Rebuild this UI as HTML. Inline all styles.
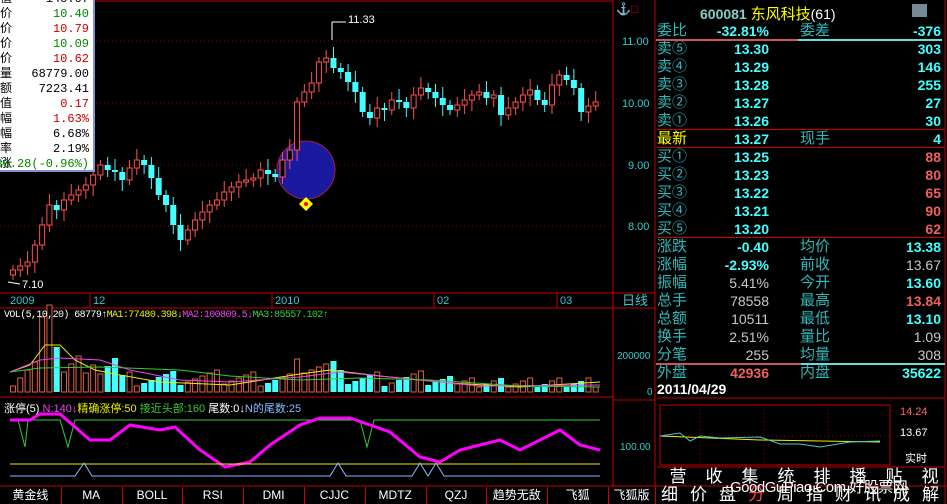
<!DOCTYPE html><html><head><meta charset="utf-8"><style>
body{margin:0;background:#000;width:947px;height:504px;overflow:hidden;position:relative;font-family:"Liberation Sans","Noto Sans CJK SC",sans-serif}
.a{position:absolute;white-space:nowrap}
.rp{position:absolute;left:657px;width:284px;font-size:15px;height:18px;line-height:18px}
.rp .l{position:absolute;left:0;color:#2fb8b8}
.rp .v{position:absolute;right:172px;color:#4ff;font-weight:bold;font-family:"Liberation Sans",sans-serif;font-size:14px}
.rp .l2{position:absolute;left:143px;color:#2fb8b8}
.rp .v2{position:absolute;right:0;color:#4ff;font-weight:bold;font-size:14px}
.g{color:#c8c8c8!important;font-weight:normal!important}
.r{color:#f06060!important}
.ib div{height:15px;line-height:15px;font-size:12px;font-family:"Liberation Mono","Noto Sans CJK SC",monospace;position:relative}
.ib span{position:absolute;right:4px}
.bt{position:absolute;width:36px;text-align:center;color:#fff;font-size:17px;line-height:18px}
</style></head><body>
<svg id="s" width="947" height="504" style="position:absolute;left:0;top:0" font-family="Liberation Sans" font-size="11"></svg>
<div class="a ib" style="left:0;top:-8px;width:93px;height:178px;background:#fff;border:2px solid #8090d0;border-top:none;border-left:none">
<div>值<span>148.07</span></div><div>价<span style="color:#080">10.40</span></div><div>价<span style="color:#c00">10.79</span></div><div>价<span style="color:#080">10.09</span></div><div>价<span style="color:#c00">10.62</span></div><div>量<span>68779.00</span></div><div>额<span>7223.41</span></div><div>值<span style="color:#c00">0.17</span></div><div>幅<span style="color:#c00">1.63%</span></div><div>幅<span>6.68%</span></div><div>率<span>2.19%</span></div><div>涨<span style="color:#080">30.28(-0.96%)</span></div></div>
<div class="a" style="left:700px;top:3px;font-size:14px;color:#9fc"><b style="color:#8cc">600081</b> <span style="color:#ff0;font-size:15px">东风科技</span><span style="color:#fff">(61)</span></div>
<div class="a" style="left:912px;top:4px;width:15px;height:13px;background:#789"></div>
<div id="rp"></div>
<div class="a" style="left:657px;top:381px;color:#fff;font-size:14px;font-weight:bold">2011/04/29</div>
<div class="a" style="left:0;top:487px;width:947px;height:17px;font-size:12px;color:#fff" id="tabs"></div>
<div id="btns"></div>
<script>
var S=document.getElementById('s'),h='';
function L(x1,y1,x2,y2,c,w,d){h+='<line x1="'+x1+'" y1="'+y1+'" x2="'+x2+'" y2="'+y2+'" stroke="'+c+'" stroke-width="'+(w||1)+'"'+(d?' stroke-dasharray="'+d+'"':'')+'/>'}
function R(x,y,w,hh,f,s){h+='<rect x="'+x+'" y="'+y+'" width="'+w+'" height="'+hh+'" fill="'+f+'"'+(s?' stroke="'+s+'"':'')+'/>'}
function T(x,y,t,c,sz,a){h+='<text x="'+x+'" y="'+y+'" fill="'+c+'" font-size="'+(sz||11)+'"'+(a?' text-anchor="'+a+'"':'')+'>'+t+'</text>'}
var red='#c00000';
L(0,1,613,1,red);L(613,0,613,487,red);L(655,0,655,487,red);L(945,0,945,504,red);
L(0,293,613,293,red);L(0,308,655,308,red);L(0,397,613,397,red);L(613,400,655,400,red);L(0,486,947,486,red);
L(613,293,655,293,red);
[41,103,165,226].forEach(function(y){L(0,y,613,y,'#800',1,'1 3')});
T(622,45,'11.00','#3cc');T(622,107,'10.00','#3cc');T(628,169,'9.00','#3cc');T(628,230,'8.00','#3cc');
T(10,304,'2009','#3cc');T(93,304,'12','#3cc');T(275,304,'2010','#3cc');T(437,304,'02','#3cc');T(560,304,'03','#3cc');
[90,272,434,557].forEach(function(x){L(x,293,x,308,red)});
h+='<text x="622" y="305" fill="#3cc" font-size="13" font-family="Noto Sans CJK SC">日线</text>';
T(617,359,'200000','#3cc',10);T(647,395,'0','#3cc',10);T(620,450,'100.00','#3cc',10);
h+='<text x="616" y="13" fill="'+red+'" font-size="12">⚓□</text>';
h+='<circle cx="306" cy="170" r="29" fill="#1a1aa0" stroke="#a02040"/>';
var cl=[270,266,262,245,225,205,210,200,195,190,185,175,165,170,172,180,168,160,165,178,195,205,225,240,230,220,212,205,200,192,187,182,180,178,170,174,177,160,150,102,92,83,62,58,68,72,82,92,112,118,108,110,100,102,108,95,88,92,98,105,110,105,100,95,92,98,95,115,108,102,95,90,100,105,85,75,80,88,112,106,102];
var n=cl.length,dx=590/n,prev=275;
for(var i=0;i<n;i++){var x=10+i*dx,c=cl[i],o=prev,up=c<o;var tp=Math.min(c,o),bm=Math.max(c,o);if(bm-tp<2)bm=tp+2;
var col=up?'#ff5050':'#4ff';L(x+3,tp-5-(i%3)*3,x+3,bm+5+(i%4)*2,col);
if(up)R(x+0.5,tp,5,bm-tp,'#000',col);else R(x,tp,6,bm-tp,col);prev=c;
var v=6+((i*37)%17)+(i<15?(i%5)*5:0)+(i>38&&i<45?12:0);if(i==4||i==5)v=75+(i-4)*12;if(i==6)v=45;if(i>60)v=5+(i%4)*3;
if(up)R(x+0.5,392-v,5,v,'#000','#e06040');else R(x,392-v,6,v,'#4ff');}
T(348,23,'11.33','#fff',11);L(332,22,346,22,'#fff');L(332,22,332,40,'#fff');L(8,282,20,284,'#fff');T(22,288,'7.10','#fff',11);
h+='<path d="M306 197l7 7-7 7-7-7z" fill="#ff0"/><circle cx="306" cy="204" r="2" fill="red"/>';
h+='<polyline fill="none" stroke="#ee0" points="10,372 30,365 45,345 60,345 75,360 95,370 120,375 160,382 230,385 300,374 330,370 380,376 450,383 520,387 600,382"/>';
h+='<polyline fill="none" stroke="#e4e" points="10,372 40,360 60,358 100,360 130,370 180,380 230,382 300,377 340,372 400,378 480,386 600,385"/>';
h+='<polyline fill="none" stroke="#3c3" points="10,372 40,368 100,367 180,370 230,376 300,380 360,378 430,380 520,386 600,387"/>';
h+='<polyline fill="none" stroke="#3c3" points="10,420 18,420 25,447 28,420 60,420 68,447 75,420 360,420 367,447 374,420 600,420"/>';
h+='<polyline fill="none" stroke="#f0f" stroke-width="3" points="10,420 30,420 40,414 60,414 90,440 110,440 130,425 160,430 175,427 200,450 225,467 250,462 270,445 300,425 320,418 350,418 370,425 390,432 420,457 440,462 460,450 500,440 520,450 560,430 580,445 600,450"/>';
L(10,464,600,464,'#ee0');
h+='<polyline fill="none" stroke="#8bf" points="10,476 75,476 84,463 92,476 330,476 338,463 346,476 412,476 420,463 428,476 436,463 444,476 600,476"/>';
L(657,398,945,398,red);L(657,467,945,467,red);R(660,405,230,60,'none',red);
[700,764,828].forEach(function(x){L(x,405,x,465,'#800',1,'1 3')});L(660,436,890,436,'#800',1,'1 3');
h+='<polyline fill="none" stroke="#ee0" points="660,436 760,440 880,442"/><polyline fill="none" stroke="#4cc" points="660,436 680,433 690,441 700,436 720,438 760,437 780,444 800,444 820,447 850,442 880,441"/>';
T(900,415,'14.24','#f66',11);T(900,436,'13.67','#fff',11);h+='<text x="905" y="462" fill="#fff" font-size="11" font-family="Noto Sans CJK SC">实时</text>';
S.innerHTML=h;
function D(x,y,html,st){document.body.insertAdjacentHTML('beforeend','<div class="a" style="left:'+x+'px;top:'+y+'px;'+(st||'')+'">'+html+'</div>')}
D(4,310,'VOL(5,10,20) 68779<span style="color:#fff">↑</span><span style="color:#ee0">MA1:77480.398↓</span><span style="color:#e4e">MA2:100809.5↓</span><span style="color:#3c3">MA3:85557.102↑</span>','color:#fff;font-size:10px;font-family:Liberation Mono,monospace;letter-spacing:-0.6px');
D(4,400,'涨停(5) <span style="color:#e4e">N:140↓</span><span style="color:#ee0">精确涨停:50</span> <span style="color:#3c3">接近头部:160</span> 尾数:0↓<span style="color:#8bf">N的尾数:25</span>','color:#fff;font-size:11px');
var rows=[['委比','-32.81%','委差','-376'],['卖⑤','13.30','','303'],['卖④','13.29','','146'],['卖③','13.28','','255'],['卖②','13.27','','27'],['卖①','13.26','','30'],['最新','13.27','现手','4'],['买①','13.25','','88r'],['买②','13.23','','80r'],['买③','13.22','','65r'],['买④','13.21','','90r'],['买⑤','13.20','','62r'],['涨跌','-0.40','均价','13.38'],['涨幅','-2.93%','前收','13.67g'],['振幅','5.41%g','今开','13.60'],['总手','78558g','最高','13.84r'],['总额','10511g','最低','13.10'],['换手','2.51%g','量比','1.09g'],['分笔','255g','均量','308g'],['外盘','42936r','内盘','35622']];
var out='';rows.forEach(function(r,i){var y=22+i*18;function c(v){return v.slice(-1)=='g'?['g',v.slice(0,-1)]:v.slice(-1)=='r'?['r',v.slice(0,-1)]:['',v]}
var a=c(r[1]),b=c(r[3]);out+='<div class="rp" style="top:'+y+'px"><span class="l"'+(i==6?' style="color:#ff0"':'')+'>'+r[0]+'</span><span class="v '+a[0]+'">'+a[1]+'</span><span class="l2">'+r[2]+'</span><span class="v2 '+b[0]+'">'+b[1]+'</span></div>'});
document.getElementById('rp').innerHTML=out;
D(656,39,'<div style="width:142px;height:2px;background:#c55;display:inline-block"></div><div style="width:144px;height:2px;background:#6dd;display:inline-block"></div>','top:39px;font-size:0');
[129,147,237].forEach(function(y){D(657,y,'','width:288px;height:1px;background:#c00')});
D(801,363,'','width:144px;height:2px;background:#6dd');
D(656,363,'','width:145px;height:2px;background:#c55');
var b1='营收集统排播贴视',b2='细价盘分周指财讯成解',bh='';
for(var k=0;k<8;k++)bh+='<div class="bt" style="left:'+(660+k*36)+'px;top:468px">'+b1[k]+'</div>';
for(var k=0;k<10;k++)bh+='<div class="bt" style="left:'+(655+k*29)+'px;top:486px;width:29px'+(k==3?';color:#f44':'')+'">'+b2[k]+'</div>';
document.getElementById('btns').innerHTML=bh;
D(730,476,'GoodGuPiao.Com 好股票网','color:#fff;font-size:15px;letter-spacing:-0.5px');
var tb=['黄金线','MA','BOLL','RSI','DMI','CJJC','MDTZ','QZJ','趋势无敌','飞狐','飞狐版'],t='';
tb.forEach(function(s,i){var w=i==10?47:60.8;t+='<div style="position:absolute;left:'+(i*60.8)+'px;width:'+w+'px;text-align:center;border-right:1px solid #c00;height:17px;line-height:17px">'+s+'</div>'});
document.getElementById('tabs').innerHTML=t;
</script></body></html>
